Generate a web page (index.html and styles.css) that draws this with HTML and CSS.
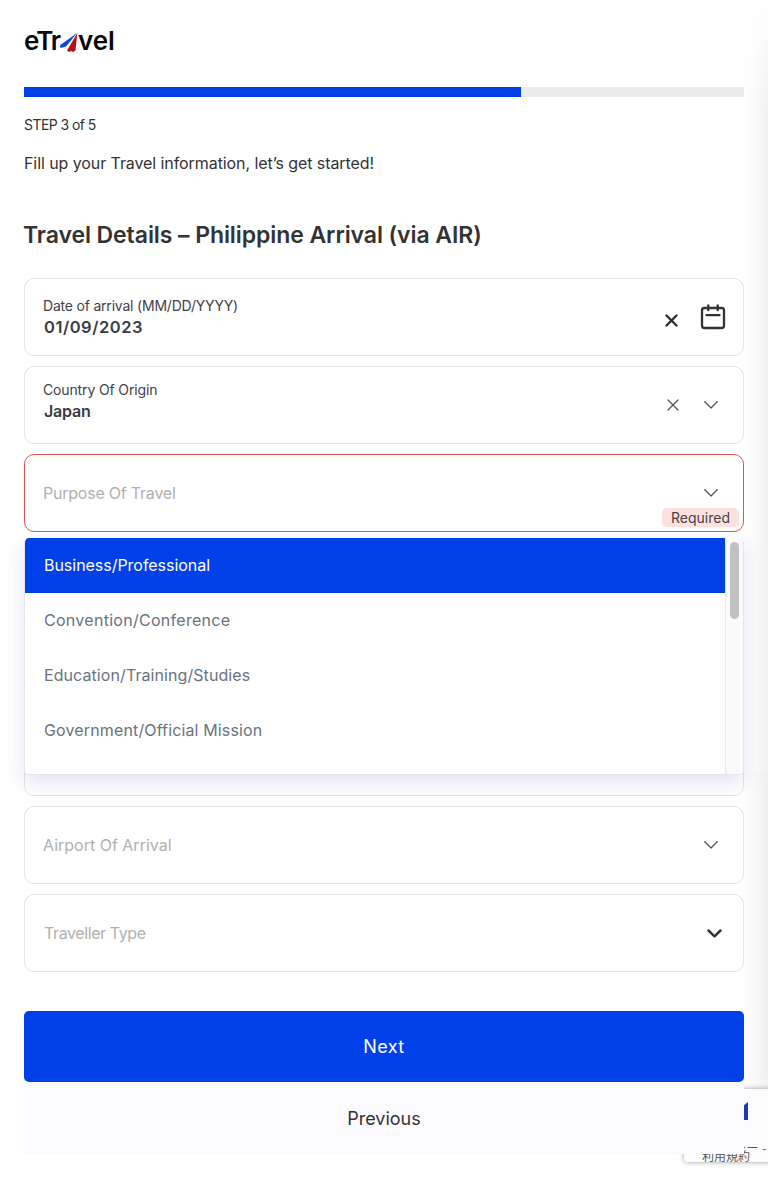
FILE: index.html
```html
<!DOCTYPE html>
<html lang="en">
<head>
<meta charset="utf-8">
<title>eTravel</title>
<link rel="stylesheet" href="styles.css">
</head>
<body>
<div class="edge-shade upper"></div>
<div class="edge-shade lower"></div>
<aside class="badge">
  <svg class="badge-mark" width="5" height="20" viewBox="0 0 5 20"><path d="M0 4 5 0V18H0Z" fill="#1c3aa9"/></svg>
  <span class="badge-privacy">シー -</span>
  <span class="badge-terms">利用規約</span>
</aside>
<main class="page">
  <header class="logo" aria-label="eTravel">
    <span class="logo-start">eTr</span>
    <svg class="logo-mark" width="20" height="21" viewBox="0 0 20 21"><path d="M18 1 2 12.5Q-.5 15.5 2.5 15.8L7 14.5Z" fill="#0b46e6"/><path d="M18.3 1 8 18.5 10 20 12 19 14 20 16.5 18.5Z" fill="#b51218"/></svg>
    <span class="logo-end">vel</span>
  </header>
  <div class="progress"><div class="progress-fill"></div></div>
  <p class="step">STEP 3 of 5</p>
  <p class="intro">Fill up your Travel information, let’s get started!</p>
  <h1 class="title">Travel Details – Philippine Arrival (via AIR)</h1>
  <form class="fields">
    <div class="field">
      <div class="field-text date-text"><span class="label date-label">Date of arrival (MM/DD/YYYY)</span><span class="value date-value">01/09/2023</span></div>
      <svg class="clear-bold" width="13" height="13" viewBox="0 0 13 13"><path d="M1.5 1.5 11.5 11.5M11.5 1.5 1.5 11.5"/></svg>
      <svg class="calendar" width="26" height="26" viewBox="0 0 26 26"><rect x="2" y="4" width="22" height="20" rx="2.5"/><path d="M8.3 1.4V6.2M17.7 1.4V6.2M6.5 11.2H19.5"/></svg>
    </div>
    <div class="field">
      <div class="field-text"><span class="label country-label">Country Of Origin</span><span class="value country-value">Japan</span></div>
      <svg class="clear" width="12" height="12" viewBox="0 0 12 12"><path d="M1 1 11 11M11 1 1 11"/></svg>
      <svg class="chevron" width="14" height="8" viewBox="0 0 14 8"><path d="M.8.8 7 7 13.2.8"/></svg>
    </div>
    <div class="field invalid">
      <span class="placeholder purpose">Purpose Of Travel</span>
      <svg class="chevron" width="14" height="8" viewBox="0 0 14 8"><path d="M.8.8 7 7 13.2.8"/></svg>
      <span class="required">Required</span>
      <div class="menu">
        <ul class="options">
          <li class="option active">Business/Professional</li>
          <li class="option convention">Convention/Conference</li>
          <li class="option education">Education/Training/Studies</li>
          <li class="option government">Government/Official Mission</li>
        </ul>
        <div class="track"><div class="thumb"></div></div>
      </div>
    </div>
    <div class="field"></div>
    <div class="field"></div>
    <div class="field"></div>
    <div class="field">
      <span class="placeholder">Airport Of Arrival</span>
      <svg class="chevron" width="14" height="8" viewBox="0 0 14 8"><path d="M.8.8 7 7 13.2.8"/></svg>
    </div>
    <div class="field">
      <span class="placeholder traveller">Traveller Type</span>
      <svg class="chevron-bold" width="15" height="9" viewBox="0 0 15 9"><path d="M1.5 1.5 7.5 7.3 13.5 1.5"/></svg>
    </div>
  </form>
  <div class="actions">
    <button class="button next">Next</button>
    <button class="button previous">Previous</button>
  </div>
</main>
</body>
</html>
```

FILE: styles.css
```css
* { box-sizing: border-box; }
body { margin: 0; position: relative; height: 1178px; overflow: hidden; background: #fff; color: #333; font-family: Inter, "Liberation Sans", sans-serif; }
.edge-shade { position: absolute; right: 0; width: 26px; }
.upper { top: 0; height: 771px; background: linear-gradient(to bottom, #fff, transparent 110px), linear-gradient(to right, #fff, #fbfbfb 50%, #f1f1f1); }
.lower { top: 771px; height: 407px; background: linear-gradient(to bottom, transparent 300px, #fff), linear-gradient(to right, #fff, #f9f9f9 50%, #efefef); }
.page { position: relative; padding: 0 24px; }
.logo { display: flex; align-items: flex-start; height: 87px; padding-top: 25px; color: #080808; font-family: Inter, sans-serif; font-size: 26px; font-weight: 600; line-height: 32px; }
.logo-start { width: 38px; letter-spacing: -1.1px; }
.logo-mark { margin: 7px -4px 0 -3px; flex: none; }
.logo-end { margin-left: 3px; letter-spacing: -.1px; }
.progress { height: 9.5px; background: #ececec; }
.progress-fill { height: 100%; width: 69%; background: #0040e8; }
.step, .intro, .title { margin: 0; white-space: nowrap; }
.step { margin-top: 18.5px; font-size: 14px; line-height: 20px; letter-spacing: -.57px; }
.intro { margin-top: 16px; font-size: 16px; line-height: 24px; letter-spacing: -.08px; }
.title { margin-top: 44px; margin-left: -1px; font-size: 23px; line-height: 32px; font-weight: 600; letter-spacing: -.08px; }
.fields { display: flex; flex-direction: column; gap: 10px; margin-top: 27px; }
.field { position: relative; display: flex; align-items: center; height: 78px; border: 1px solid #e4e4e7; border-radius: 10px; padding: 0 25px 0 18px; background: #fff; }
.invalid { border-color: #e35252; z-index: 2; }
.field-text { display: flex; flex-direction: column; align-items: flex-start; margin-top: -8px; }
.date-text { margin-top: -1px; }
.label { font-size: 14px; line-height: 20px; color: #3f4149; white-space: nowrap; }
.date-label { letter-spacing: -.2px; }
.country-label { letter-spacing: -.14px; }
.value { margin-left: 1px; font-size: 16px; line-height: 22px; font-weight: 600; color: #3a3c42; }
.date-value { font-size: 16.5px; letter-spacing: .53px; }
.country-value { letter-spacing: -.2px; }
.placeholder { font-size: 16px; color: #b0b0b0; }
.purpose { letter-spacing: -.22px; }
.traveller { margin-left: 1px; letter-spacing: -.4px; }
svg { flex: none; }
.field path, .field rect { fill: none; stroke: #52545a; stroke-width: 1.3; stroke-linecap: round; stroke-linejoin: round; }
.chevron, .chevron-bold, .clear-bold, .clear { margin-left: auto; }
.clear + .chevron { margin-left: 25px; }
.field .clear-bold path { stroke: #2b2b2b; stroke-width: 2.3; }
.clear-bold { margin-top: 6px; }
.calendar { margin: 0 -8px 0 22px; }
.field .calendar path, .field .calendar rect { stroke: #333; stroke-width: 2.3; }
.field .chevron-bold path { stroke: #33353b; stroke-width: 2.5; }
.chevron-bold { margin-right: -4px; margin-top: 1px; }
.required { position: absolute; right: 4px; bottom: 4px; width: 77px; height: 19px; border-radius: 5px; background: #fde0e0; color: #444; font-size: 14px; line-height: 19px; text-align: center; }
.menu { position: absolute; left: -1px; top: 83px; width: 720px; height: 237px; display: flex; overflow: hidden; background: #fff; border: 1px solid #e4e5ee; border-top: 0; border-radius: 5px; box-shadow: 0 8px 20px rgba(70,70,190,.15); }
.options { flex: 1; margin: 0; padding: 0; list-style: none; }
.option { height: 54.8px; display: flex; align-items: center; padding-left: 19px; color: #6b7280; font-size: 16px; white-space: nowrap; }
.active { color: #fff; background: #0040e8; letter-spacing: -.03px; }
.convention { letter-spacing: .28px; }
.education { letter-spacing: .08px; }
.government { letter-spacing: .14px; }
.track { width: 18px; padding: 4px; background: #fafafa; border-left: 1px solid #e8e8e8; }
.thumb { width: 9px; height: 77px; border-radius: 5px; background: #c1c1c1; }
.actions { margin-top: 38.5px; display: flex; flex-direction: column; }
.button { height: 71.5px; padding: 1px 0 0; border: 0; border-radius: 5px; font-family: inherit; font-size: 18px; }
.next { background: #0040e8; color: #fff; letter-spacing: .4px; }
.previous { background: #fafaff; color: #333; border-radius: 0; }
.badge { position: absolute; left: 684px; top: 1089px; width: 100px; height: 73px; background: #fbfbfb; border-radius: 3px; box-shadow: 0 0 5px #999; color: #555; font-family: "Noto Sans CJK JP", sans-serif; font-size: 12px; overflow: hidden; }
.badge-mark { position: absolute; left: 59px; top: 13px; }
.badge-privacy { position: absolute; left: 50px; top: 53px; white-space: nowrap; line-height: 12px; letter-spacing: .5px; }
.badge-terms { position: absolute; left: 18px; top: 58px; line-height: 18px; }
```
